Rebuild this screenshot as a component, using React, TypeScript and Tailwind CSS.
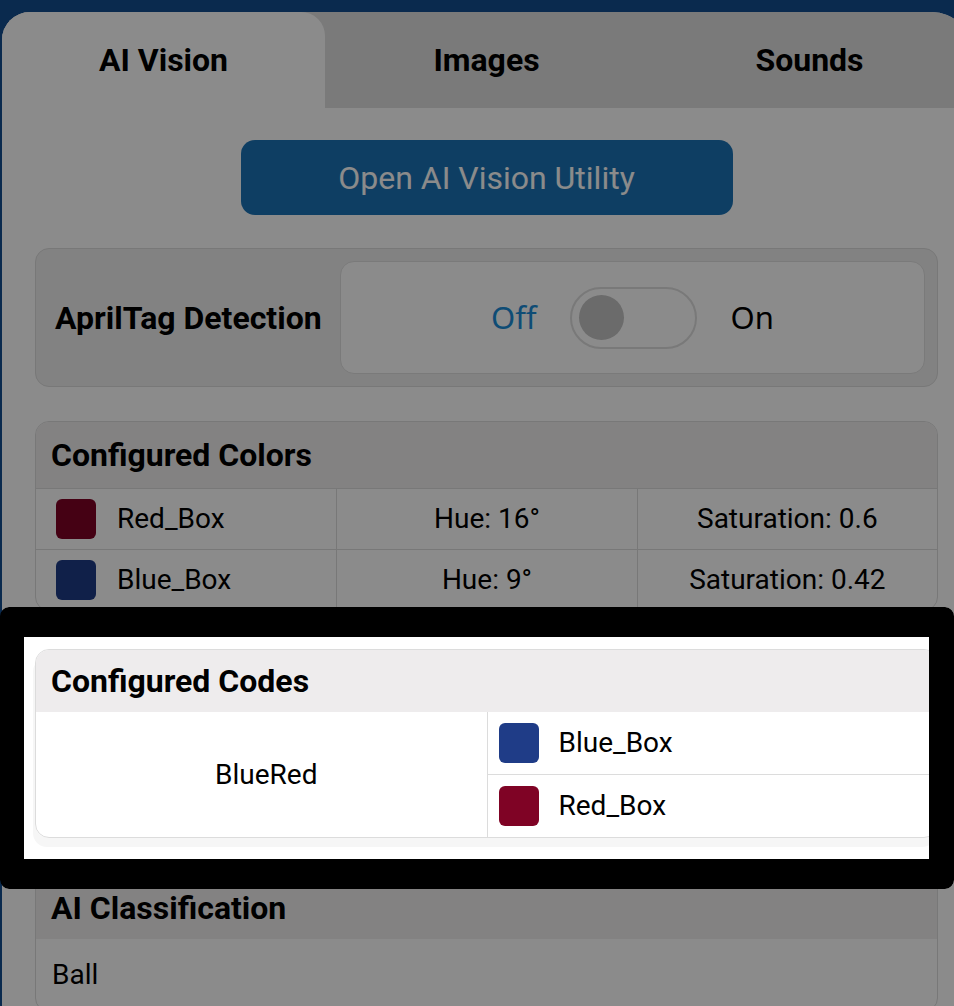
import React from "react";

const RED = "#7f0325";
const BLUE = "#1f3c87";

function Swatch({ color }: { color: string }) {
  return <div className="w-[40px] h-[40px] rounded-[6px] shrink-0" style={{ backgroundColor: color }} />;
}

export default function App() {
  return (
    <div
      className="relative w-[954px] h-[1006px] overflow-hidden bg-[#134e90] pt-[12px] pl-[2px] text-black"
      style={{ fontFamily: "Roboto, 'Liberation Sans', sans-serif" }}
    >
      <div className="w-[969px] min-h-[1100px] bg-white rounded-tl-[28px] rounded-tr-[39px] flex flex-col">
        {/* Tabs */}
        <div className="grid grid-cols-3 h-[96px] bg-[#e0e0e0] rounded-tl-[28px] rounded-tr-[39px]">
          <div className="bg-white rounded-tl-[28px] rounded-tr-[24px] flex items-center justify-center text-[32px] font-bold">
            AI Vision
          </div>
          <div className="flex items-center justify-center text-[32px] font-bold">Images</div>
          <div className="flex items-center justify-center text-[32px] font-bold">Sounds</div>
        </div>

        {/* Content */}
        <div className="px-[33px] pt-[32px] flex flex-col">
          <button className="mx-auto w-[492px] h-[75px] rounded-[14px] bg-[#1b73b6] text-white text-[32px]">
            Open AI Vision Utility
          </button>

          {/* AprilTag */}
          <div className="mt-[33px] h-[139px] border border-[#dcdcdc] rounded-[14px] bg-[#efefef] flex items-center p-[12px]">
            <div className="w-[292px] pl-[7px] text-[32px] font-bold">AprilTag Detection</div>
            <div className="flex-1 h-full bg-white border border-[#e0e0e0] rounded-[14px] flex items-center justify-center">
              <span className="text-[31px] text-[#1b8cd7]" style={{ fontFamily: "'Noto Sans', sans-serif" }}>Off</span>
              <div className="ml-[33px] mr-[34px] w-[127px] h-[62px] rounded-full border-2 border-[#dedede] bg-white flex items-center pl-[7px]">
                <div className="w-[45px] h-[45px] rounded-full bg-[#c4c4c4]" />
              </div>
              <span className="text-[31px]" style={{ fontFamily: "'Noto Sans', sans-serif" }}>On</span>
            </div>
          </div>

          {/* Configured Colors */}
          <div className="mt-[34px] border border-[#dcdcdc] rounded-[14px] overflow-hidden">
            <div className="h-[66px] bg-[#f0eeef] flex items-center pl-[15px] text-[32px] font-bold">Configured Colors</div>
            {[
              { name: "Red_Box", color: RED, hue: "16°", sat: "0.6" },
              { name: "Blue_Box", color: BLUE, hue: "9°", sat: "0.42" },
            ].map((r) => (
              <div key={r.name} className="grid grid-cols-3 h-[61px] border-t border-[#dcdcdc] text-[28px]">
                <div className="flex items-center pl-[20px] gap-[21px]">
                  <Swatch color={r.color} />
                  <span>{r.name}</span>
                </div>
                <div className="flex items-center justify-center border-l border-[#dcdcdc]">Hue: {r.hue}</div>
                <div className="flex items-center justify-center border-l border-[#dcdcdc]">Saturation: {r.sat}</div>
              </div>
            ))}
          </div>

          {/* Configured Codes */}
          <div className="mt-[38px] border border-[#dcdcdc] rounded-[14px] overflow-hidden shadow-[-2px_9px_0_0_#f6f6f6]">
            <div className="h-[62px] bg-[#eeeced] flex items-center pl-[15px] text-[32px] font-bold">Configured Codes</div>
            <div className="grid grid-cols-2 text-[28px]">
              <div className="flex items-center justify-center pl-[10px]">BlueRed</div>
              <div className="border-l border-[#dcdcdc] flex flex-col">
                <div className="h-[62px] flex items-center pl-[11px] gap-[20px]">
                  <Swatch color={BLUE} />
                  <span>Blue_Box</span>
                </div>
                <div className="h-[63px] border-t border-[#dcdcdc] flex items-center pl-[11px] gap-[20px]">
                  <Swatch color={RED} />
                  <span>Red_Box</span>
                </div>
              </div>
            </div>
          </div>

          {/* AI Classification */}
          <div className="mt-[38px] border border-[#dcdcdc] rounded-[14px] overflow-hidden">
            <div className="h-[62px] bg-[#f0eeef] flex items-center pl-[15px] text-[32px] font-bold">AI Classification</div>
            <div className="h-[72px] flex items-center pl-[16px] text-[28px]">Ball</div>
          </div>
        </div>
      </div>

      {/* Spotlight overlay */}
      <div className="absolute left-0 top-[607px] w-[954px] h-[282px] rounded-[9px] border-black border-l-[24px] border-t-[30px] border-r-[25px] border-b-[30px] shadow-[0_0_0_2000px_rgba(0,0,0,0.455)] pointer-events-none" />
    </div>
  );
}
